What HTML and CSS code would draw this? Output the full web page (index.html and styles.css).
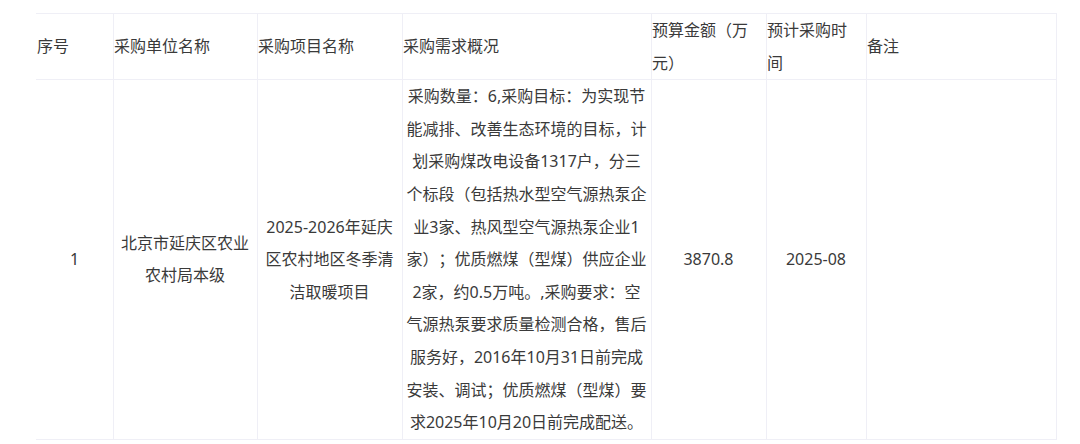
FILE: index.html
```html
<!DOCTYPE html>
<html lang="zh-CN">
<head>
  <meta charset="UTF-8" />
  <meta name="viewport" content="width=device-width, initial-scale=1.0"/>
  <title>采购意向</title>
  <link rel="stylesheet" href="styles.css">
</head>
<body>

  <div class="wrap">
    <table class="plan">
      <colgroup>
        <col class="c-no">
        <col class="c-unit">
        <col class="c-project">
        <col class="c-desc">
        <col class="c-budget">
        <col class="c-time">
        <col class="c-note">
      </colgroup>
      <thead>
        <tr>
          <th>序号</th>
          <th>采购单位名称</th>
          <th>采购项目名称</th>
          <th>采购需求概况</th>
          <th>预算金额（万元）</th>
          <th>预计采购时间</th>
          <th>备注</th>
        </tr>
      </thead>
      <tbody>
        <tr>
          <td>1</td>
          <td>北京市延庆区农业农村局本级</td>
          <td>2025-2026年延庆区农村地区冬季清洁取暖项目</td>
          <td>采购数量：6,采购目标：为实现节能减排、改善生态环境的目标，计划采购煤改电设备1317户，分三个标段（包括热水型空气源热泵企业3家、热风型空气源热泵企业1家）；优质燃煤（型煤）供应企业2家，约0.5万吨。,采购要求：空气源热泵要求质量检测合格，售后服务好，2016年10月31日前完成安装、调试；优质燃煤（型煤）要求2025年10月20日前完成配送。</td>
          <td>3870.8</td>
          <td>2025-08</td>
          <td></td>
        </tr>
      </tbody>
    </table>
  </div>

</body>
</html>
```

FILE: styles.css
```css
body {
  margin: 0;
  background: #fff;
  font-family: "Noto Sans", "Noto Sans CJK SC", sans-serif;
  font-size: 16px;
  color: #3a3a3a;
  text-spacing-trim: space-all;
}
.wrap {
  padding: 13px 24px 0 36px;
}
table.plan {
  width: 1020px;
  table-layout: fixed;
  border-collapse: collapse;
}
.c-no { width: 77px; }
.c-unit { width: 144px; }
.c-project { width: 145px; }
.c-desc { width: 249px; }
.c-budget { width: 115px; }
.c-time { width: 100px; }
.c-note { width: 190px; }
th, td {
  padding: 0 5px 0 0;
  border: 1px solid #efeff6;
  line-height: 32.6px;
  vertical-align: middle;
  word-break: break-all;
}
th {
  font-weight: normal;
  text-align: left;
}
td {
  text-align: center;
  padding: 0 3px 0 2px;
}
th:first-child, td:first-child {
  border-left-color: transparent;
}
```
